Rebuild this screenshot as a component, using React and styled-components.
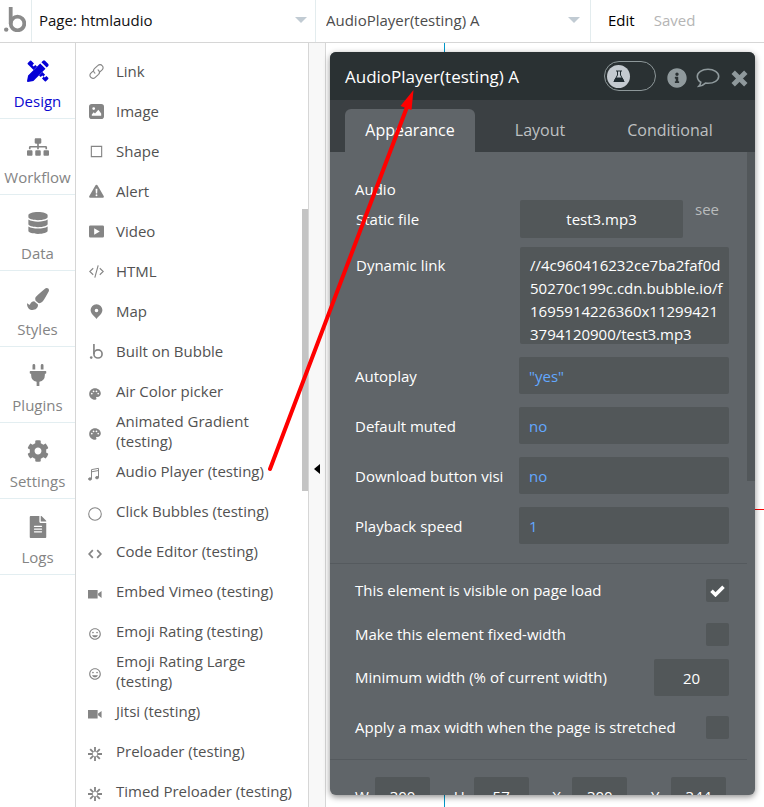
import React from "react";
import styled, { createGlobalStyle, css } from "styled-components";
import { FaSitemap, FaDatabase, FaPaintBrush, FaPlug, FaCog, FaFileAlt, FaInfoCircle } from "react-icons/fa";
import { MdPalette, MdInsertEmoticon } from "react-icons/md";

const Global = createGlobalStyle`
  * { box-sizing: border-box; }
  body { margin: 0; background: #fff; overflow: hidden; }
  body, button, input, select, textarea {
    font-family: "Open Sans", "Noto Sans", sans-serif;
    font-size: 15px;
  }
  button { border: 0; padding: 0; background: none; color: inherit; cursor: pointer; }
`;

const Page = styled.div`
  position: relative;
  display: flex;
  flex-direction: column;
  height: 100vh;
  overflow: hidden;
`;

const TopBar = styled.header`
  display: flex;
  flex: none;
  height: 43px;
  border-bottom: 1px solid #d6d6d6;
`;

const LogoLink = styled.a`
  width: 32px;
  display: flex;
  align-items: center;
  justify-content: center;
  padding: 0 1px 3px 0;
  color: #8b8b8b;
  border-right: 1px solid #e3ecee;
`;

const Picker = styled.div`
  display: grid;
  grid-template-columns: 1fr 10px;
  align-items: center;
  width: ${(p) => p.$width};
  padding: ${(p) => (p.$wide ? "0 10px 2px 7px" : "0 12px 2px 10px")};
  border-right: 1px solid #e3ecee;
`;

const PickerSelect = styled.select`
  appearance: none;
  border: 0;
  padding: 0;
  background: none;
  color: ${(p) => p.$color};
`;

const Caret = styled.span`
  border: 6px solid transparent;
  border-top: 6px solid #c1cbd3;
  border-bottom: 0;
`;

const TopActions = styled.div`
  display: flex;
  align-items: center;
  gap: 19px;
  padding: 0 0 2px 17px;
`;

const EditButton = styled.button`
  color: #000;
`;

const SavedStatus = styled.span`
  color: #b5b5b5;
`;

const Workspace = styled.div`
  display: flex;
  flex: 1;
  min-height: 0;
`;

const Sidebar = styled.nav`
  width: 76px;
  flex: none;
  border-right: 1px solid #d6d6d6;
`;

const NavLink = styled.a`
  display: flex;
  flex-direction: column;
  align-items: center;
  height: 76px;
  padding-top: 17px;
  gap: 8px;
  border-bottom: 1px solid #e3eef1;
  color: ${(p) => (p.$active ? "#0b08d0" : "#848484")};
  text-decoration: none;
  line-height: 22px;
  svg { width: 22px; height: 22px; flex: none; color: ${(p) => (p.$active ? "#0500d6" : "#848484")}; }
`;

const Palette = styled.section`
  display: flex;
  flex: none;
  width: 233px;
  border-right: 1px solid #d6d6d6;
  overflow: hidden;
`;

const ElementList = styled.ul`
  flex: 1;
  margin: 0;
  padding: 8px 0 0 12px;
  list-style: none;
`;

const ElementButton = styled.button`
  display: flex;
  align-items: center;
  width: 100%;
  height: 40px;
  text-align: left;
  line-height: 20px;
  color: #525252;
`;

const ElementIcon = styled.span`
  display: flex;
  width: 28px;
  flex: none;
  color: #858585;
  padding: ${(p) => (p.$plugin ? "5px 0 0 0" : "0 0 0 1px")};
  svg { width: ${(p) => (p.$plugin ? "14px" : "15px")}; height: ${(p) => (p.$plugin ? "14px" : "15px")}; }
`;

const Scroller = styled.div`
  flex: none;
  width: ${(p) => p.$width};
  padding-top: ${(p) => p.$offset};
  &::before {
    content: "";
    display: block;
    height: ${(p) => p.$length};
    background: ${(p) => p.$color};
  }
`;

const Collapse = styled.button`
  flex: none;
  width: 17px;
  display: flex;
  align-items: center;
  justify-content: center;
  background: #f8f8f8;
  border-right: 1px solid #d6d6d6;
  padding-top: 88px;
`;

const CollapseArrow = styled.span`
  border: 5px solid transparent;
  border-right: 6px solid #000;
  border-left: 0;
`;

const Canvas = styled.main`
  position: relative;
  flex: 1;
  min-width: 0;
  display: flex;
  padding: 9px 9px 12px 4px;
`;

const VerticalGuide = styled.span`
  position: absolute;
  top: 0;
  bottom: 0;
  left: 118px;
  width: 1px;
  background: #0097c9;
`;

const HorizontalGuide = styled.span`
  position: absolute;
  top: 466px;
  right: 0;
  width: 60px;
  height: 1px;
  background: #f00;
`;

const Panel = styled.section`
  position: relative;
  flex: 1;
  min-width: 0;
  display: flex;
  flex-direction: column;
  border-radius: 6px;
  overflow: hidden;
  background: #606569;
  color: #fff;
  box-shadow: 0 2px 6px rgba(0, 0, 0, 0.45);
`;

const PanelHeader = styled.header`
  display: flex;
  align-items: center;
  flex: none;
  height: 48px;
  padding: 0 7px 0 15px;
  background: #2a3133;
`;

const PanelTitle = styled.h1`
  flex: 1;
  margin: 0;
  font-size: 17px;
  font-weight: 400;
  white-space: nowrap;
`;

const LabToggle = styled.button`
  display: flex;
  align-items: center;
  width: 52px;
  height: 30px;
  margin-right: 11px;
  padding: 0 2px;
  border: 1px solid #8d9799;
  border-radius: 15px;
`;

const Knob = styled.span`
  display: flex;
  align-items: center;
  justify-content: center;
  width: 23px;
  height: 23px;
  border-radius: 50%;
  background: #c4cad0;
`;

const HeaderButton = styled.button`
  display: flex;
  margin-left: ${(p) => p.$gap || "0"};
  padding-top: 4px;
  color: #8f999c;
`;

const Tabs = styled.div`
  display: flex;
  flex: none;
  height: 52px;
  padding: 9px 20px 0 15px;
  background: #3b4043;
`;

const Tab = styled.button`
  flex: 1;
  padding-bottom: 2px;
  font-size: 16px;
  border-radius: 6px 6px 0 0;
  color: #bfc1c2;
  ${(p) => p.$active && css`
    background: #606569;
    color: #fff;
  `}
`;

const PanelBody = styled.div`
  display: flex;
  flex: 1;
  min-height: 0;
  overflow: hidden;
`;

const Form = styled.form`
  flex: 1;
  min-width: 0;
`;

const Section = styled.div`
  display: flex;
  flex-direction: column;
  gap: 13px;
  padding: ${(p) => p.$pad};
  border-bottom: 1px solid #555a5e;
`;

const FieldGroup = styled.div`
  display: flex;
  flex-direction: column;
  gap: ${(p) => p.$gap};
`;

const GroupTitle = styled.h2`
  margin: 0;
  font-size: 15px;
  font-weight: 400;
  line-height: 22px;
`;

const FieldRow = styled.div`
  display: flex;
  align-items: ${(p) => (p.$top ? "flex-start" : "center")};
  min-height: ${(p) => p.$height || "37px"};
`;

const FieldLabel = styled.label`
  width: ${(p) => (p.$inset ? "165px" : "164px")};
  padding-left: ${(p) => (p.$inset ? "1px" : "0")};
  padding-top: ${(p) => (p.$drop || "0")};
  flex: none;
  line-height: 22px;
  white-space: nowrap;
`;

const WideLabel = styled.label`
  flex: 1;
  padding-bottom: 2px;
  line-height: 20px;
  white-space: nowrap;
`;

const fieldBox = css`
  border: 0;
  border-radius: 2px;
  background: #525759;
  color: ${(p) => (p.$dynamic ? "#62a8ff" : "#fff")};
`;

const TextField = styled.input`
  ${fieldBox}
  flex: 1;
  min-width: 0;
  height: 37px;
  padding: 0 10px;
`;

const NumberField = styled.input`
  ${fieldBox}
  width: ${(p) => p.$width};
  height: 37px;
  padding: 0;
  text-align: center;
`;

const FileButton = styled.button`
  ${fieldBox}
  flex: 1;
  height: 38px;
`;

const SeeLink = styled.a`
  align-self: flex-start;
  width: 46px;
  padding-left: 12px;
  line-height: 18px;
  color: #b9bcbd;
  text-decoration: none;
`;

const LinkField = styled.textarea`
  ${fieldBox}
  flex: 1;
  min-width: 0;
  height: 97px;
  padding: 7px 5px 0 10px;
  line-height: 23px;
  resize: none;
  overflow: hidden;
  word-break: break-all;
`;

const CheckBox = styled.input`
  ${fieldBox}
  appearance: none;
  grid-area: 1 / 1;
  width: 23px;
  height: 23px;
  margin: 0;
`;

const CheckWrap = styled.span`
  display: grid;
  place-items: center;
  svg { grid-area: 1 / 1; z-index: 1; pointer-events: none; }
`;

const Geometry = styled.div`
  display: flex;
  justify-content: space-between;
  padding: 17px 21px 0 25px;
`;

const GeometryField = styled.label`
  display: flex;
  align-items: center;
  justify-content: space-between;
  width: 75px;
`;

const ArrowOverlay = styled.svg`
  position: absolute;
  top: 0;
  left: 0;
  pointer-events: none;
`;

const Stroke = ({ size = 16, children, ...rest }) => (
  <svg width={size} height={size} viewBox="0 0 16 16" fill="none" stroke="currentColor" strokeWidth="1.2" {...rest}>{children}</svg>
);

const BubbleMark = ({ width = 16, height = 16, weight = 2.8 }) => (
  <svg width={width} height={height} viewBox="0 0 22 25" fill="none" stroke="currentColor" strokeWidth={weight}>
    <circle cx="2.2" cy="22.6" r="2.2" fill="currentColor" stroke="none" />
    <circle cx="13.5" cy="16.5" r="6.8" />
    <path d="M6.700 0V16.500" />
  </svg>
);

const DesignIcon = () => (
  <svg viewBox="0 0 22 22" fill="currentColor">
    <path d="M4.2.8 7 3.6 5.4 5.2 6.7 6.5 8.3 4.9 10 6.6 6.6 10 .8 4.2Q.2 3.6.8 3L3 .8Q3.6.2 4.2.8Z" />
    <path d="M15.4 12 12 15.4 13.7 17.1 15.3 15.5 16.6 16.8 15 18.4 17.8 21.2Q18.4 21.8 19 21.2L21.2 19Q21.8 18.4 21.2 17.8L19.4 16 17.8 17.6 16.5 16.3 18.1 14.7Z" />
    <path d="M13.2 3.5 18.5 8.8 6.4 20.9.9 22Q0 22 0 21.1L1.1 15.6ZM14.4 2.3 16 .7Q17 0 18 .7L21.3 4Q22 5 21.3 6L19.7 7.6Z" />
  </svg>
);
const LinkIcon = () => (
  <Stroke strokeLinecap="round">
    <path d="M6.3 9.7 5.6 9A3 3 0 0 1 5.8 5L9.6 1.5A3 3 0 0 1 14 1.7 3 3 0 0 1 14.2 6L12 8.2" />
    <path d="M9.7 6.3 10.4 7A3 3 0 0 1 10.2 11L6.4 14.5A3 3 0 0 1 2 14.3 3 3 0 0 1 1.8 10L4 7.8" />
  </Stroke>
);
const ImageIcon = () => (
  <svg viewBox="0 0 16 16" fill="currentColor">
    <path fillRule="evenodd" d="M3 0h10A3 3 0 0 1 16 3v10a3 3 0 0 1-3 3H3A3 3 0 0 1 0 13V3A3 3 0 0 1 3 0ZM3 12.5h10V10L10 6l-3.6 4L5 8.8l-2 2.4ZM5 3.4a1.5 1.5 0 1 0 0 3 1.5 1.5 0 0 0 0-3Z" />
  </svg>
);
const ShapeIcon = () => <Stroke><path d="M2.5 2.5h11v11h-11Z" /></Stroke>;
const AlertIcon = () => (
  <svg viewBox="0 0 16 16" fill="currentColor">
    <path fillRule="evenodd" d="M8 .8q.8 0 1.2.8l6.6 11.400q.3 1.600-1 1.700H1.200Q-.1 14.600.2 13L6.8 1.6Q7.2.8 8 .8ZM7 5l.3 5h1.4L9 5ZM8 11a1 1 0 1 0 0 2 1 1 0 0 0 0-2Z" />
  </svg>
);
const VideoIcon = () => (
  <svg viewBox="0 0 16 16" fill="currentColor">
    <path fillRule="evenodd" d="M1.500 1.500h13Q16 1.500 16 3v10q0 1.500-1.500 1.500h-13Q0 14.500 0 13V3Q0 1.500 1.500 1.500ZM5.500 4.500v7L11.500 8Z" />
  </svg>
);
const HtmlIcon = () => <Stroke><path d="M4.500 4.500.800 8l3.700 3.500M11.500 4.500 15.200 8l-3.700 3.500M9.800 1.500 6.200 14.500" /></Stroke>;
const PinIcon = () => (
  <svg viewBox="0 0 16 16" fill="currentColor">
    <path fillRule="evenodd" d="M8 .2a6.300 6.300 0 0 1 6.300 6.300C14.300 10.500 10.500 13 8 16 5.500 13 1.700 10.500 1.700 6.500A6.300 6.300 0 0 1 8 .2ZM8 5a1.900 1.900 0 1 0 0 3.800A1.900 1.900 0 0 0 8 5Z" />
  </svg>
);
const MusicIcon = () => (
  <Stroke strokeWidth="1.1">
    <path d="M4 13.500V3L12 1.500V12M4 5.500 12 4" />
    <ellipse cx="2.300" cy="13.700" rx="1.700" ry="1.300" fill="currentColor" />
    <ellipse cx="10.300" cy="12.200" rx="1.700" ry="1.300" fill="currentColor" />
  </Stroke>
);
const CircleIcon = () => <Stroke><circle cx="8" cy="8" r="7.2" /></Stroke>;
const CodeIcon = () => <Stroke strokeWidth="2"><path d="M5.500 3.500 1.300 8l4.200 4.500M10.500 3.500 14.700 8l-4.200 4.500" /></Stroke>;
const CameraIcon = () => <svg viewBox="0 0 16 16" fill="currentColor"><path d="M0 3.500h11v9.500H0ZM11.500 7.500 15.500 4.500v8L11.500 9.500Z" /></svg>;
const BurstIcon = () => (
  <Stroke strokeWidth="2.100"><path d="M8 0v5.500M8 10.500V16M0 8h5.500M10.500 8H16M2.500 2.500l3.700 3.700M9.800 9.800l3.700 3.700M13.500 2.500 9.800 6.200M6.200 9.800l-3.700 3.700" /></Stroke>
);
const FlaskIcon = () => (
  <svg width="12" height="13" viewBox="0 0 12 13" fill="none" stroke="#202b30">
    <path d="M3 1h6M4.500 1v4L1 11.500h10L7.500 5V1" />
    <path d="M3 8h6l2 3.500H1Z" fill="#202b30" />
  </svg>
);
const CommentIcon = () => (
  <svg width="24" height="20" viewBox="0 0 24 20" fill="none" stroke="currentColor" strokeWidth="1.600">
    <path d="M12 1.300c6 0 10.700 3 10.700 7s-4.700 7-10.700 7l-2.500-.2C7.500 17 5.500 18 2.800 18.300c1.200-1.300 1.900-2.500 2-4C2.600 13 1.300 10.800 1.300 8.300c0-4 4.700-7 10.700-7Z" />
  </svg>
);
const CloseIcon = () => (
  <svg width="17" height="17" viewBox="0 0 17 17" fill="none" stroke="currentColor" strokeWidth="4.800"><path d="m2.200 2.200 12.600 12.600M14.800 2.200 2.200 14.800" /></svg>
);
const CheckIcon = () => (
  <svg width="15" height="12" viewBox="0 0 15 12" fill="none" stroke="#fff" strokeWidth="3.600"><path d="m1.500 5.800 4 3.900 8-8" /></svg>
);

const navItems = [
  ["Design", DesignIcon], ["Workflow", FaSitemap], ["Data", FaDatabase], ["Styles", FaPaintBrush],
  ["Plugins", FaPlug], ["Settings", FaCog], ["Logs", FaFileAlt],
];

const elements = [
  ["Link", LinkIcon], ["Image", ImageIcon], ["Shape", ShapeIcon], ["Alert", AlertIcon],
  ["Video", VideoIcon], ["HTML", HtmlIcon], ["Map", PinIcon], ["Built on Bubble", BubbleMark],
  ["Air Color picker", MdPalette, true], ["Animated Gradient (testing)", MdPalette, true],
  ["Audio Player (testing)", MusicIcon, true], ["Click Bubbles (testing)", CircleIcon, true],
  ["Code Editor (testing)", CodeIcon, true], ["Embed Vimeo (testing)", CameraIcon, true],
  ["Emoji Rating (testing)", MdInsertEmoticon, true], ["Emoji Rating Large (testing)", MdInsertEmoticon, true],
  ["Jitsi (testing)", CameraIcon, true], ["Preloader (testing)", BurstIcon, true],
  ["Timed Preloader (testing)", BurstIcon, true],
];

const dynamicFields = [
  ["autoplay", "Autoplay", '"yes"'], ["muted", "Default muted", "no"],
  ["download", "Download button visi", "no"], ["speed", "Playback speed", "1"],
];

const Check = ({ id, checked }) => (
  <CheckWrap>
    <CheckBox id={id} type="checkbox" defaultChecked={checked} />
    {checked && <CheckIcon />}
  </CheckWrap>
);

export default function App() {
  return (
    <Page>
      <Global />
      <TopBar>
        <LogoLink href="#home" aria-label="Home"><BubbleMark width={22} height={25} weight={3.8} /></LogoLink>
        <Picker $width="284px" $wide>
          <PickerSelect aria-label="Page" $color="#111"><option>Page: htmlaudio</option></PickerSelect>
          <Caret />
        </Picker>
        <Picker $width="275px">
          <PickerSelect aria-label="Element" $color="#4c4c4c"><option>AudioPlayer(testing) A</option></PickerSelect>
          <Caret />
        </Picker>
        <TopActions>
          <EditButton type="button">Edit</EditButton>
          <SavedStatus>Saved</SavedStatus>
        </TopActions>
      </TopBar>
      <Workspace>
        <Sidebar>
          {navItems.map(([name, Icon], i) => (
            <NavLink key={name} href={`#${name.toLowerCase()}`} $active={i === 0}><Icon />{name}</NavLink>
          ))}
        </Sidebar>
        <Palette>
          <ElementList>
            {elements.map(([name, Icon, plugin]) => (
              <li key={name}>
                <ElementButton type="button"><ElementIcon $plugin={plugin}><Icon /></ElementIcon>{name}</ElementButton>
              </li>
            ))}
          </ElementList>
          <Scroller $width="6px" $offset="166px" $length="282px" $color="#c4c4c4" />
        </Palette>
        <Collapse type="button" aria-label="Collapse palette"><CollapseArrow /></Collapse>
        <Canvas>
          <VerticalGuide />
          <HorizontalGuide />
          <Panel>
            <PanelHeader>
              <PanelTitle>AudioPlayer(testing) A</PanelTitle>
              <LabToggle type="button" aria-label="Experimental features"><Knob><FlaskIcon /></Knob></LabToggle>
              <HeaderButton type="button" aria-label="Information"><FaInfoCircle size={20} /></HeaderButton>
              <HeaderButton type="button" aria-label="Comment" $gap="9px"><CommentIcon /></HeaderButton>
              <HeaderButton type="button" aria-label="Close" $gap="11px"><CloseIcon /></HeaderButton>
            </PanelHeader>
            <Tabs>
              <Tab type="button" $active>Appearance</Tab>
              <Tab type="button">Layout</Tab>
              <Tab type="button">Conditional</Tab>
            </Tabs>
            <PanelBody>
              <Form>
                <Section $pad="26px 18px 19px 25px">
                  <FieldGroup $gap="9px">
                    <div>
                      <GroupTitle>Audio</GroupTitle>
                      <FieldRow>
                        <FieldLabel as="span" $inset>Static file</FieldLabel>
                        <FileButton type="button">test3.mp3</FileButton>
                        <SeeLink href="#file">see</SeeLink>
                      </FieldRow>
                    </div>
                    <FieldRow $top>
                      <FieldLabel htmlFor="link" $inset $drop="7px">Dynamic link</FieldLabel>
                      <LinkField id="link" spellCheck={false} defaultValue="//4c960416232ce7ba2faf0d50270c199c.cdn.bubble.io/f1695914226360x112994213794120900/test3.mp3" />
                    </FieldRow>
                  </FieldGroup>
                  {dynamicFields.map(([id, label, value]) => (
                    <FieldRow key={id}>
                      <FieldLabel htmlFor={id}>{label}</FieldLabel>
                      <TextField id={id} defaultValue={value} $dynamic />
                    </FieldRow>
                  ))}
                </Section>
                <Section $pad="15px 18px 13px 25px">
                  <FieldGroup $gap="21px">
                    <FieldRow $height="23px"><WideLabel htmlFor="visible">This element is visible on page load</WideLabel><Check id="visible" checked /></FieldRow>
                    <FieldRow $height="23px"><WideLabel htmlFor="fixed">Make this element fixed-width</WideLabel><Check id="fixed" /></FieldRow>
                  </FieldGroup>
                  <FieldRow><WideLabel htmlFor="minimum">Minimum width (% of current width)</WideLabel><NumberField id="minimum" defaultValue="20" $width="75px" /></FieldRow>
                  <FieldRow><WideLabel htmlFor="maximum">Apply a max width when the page is stretched</WideLabel><Check id="maximum" /></FieldRow>
                </Section>
                <Geometry>
                  {[["W", "300"], ["H", "57"], ["X", "300"], ["Y", "344"]].map(([name, value]) => (
                    <GeometryField key={name}>{name}<NumberField defaultValue={value} $width="55px" /></GeometryField>
                  ))}
                </Geometry>
              </Form>
              <Scroller $width="8px" $offset="0" $length="329px" $color="#52575a" />
            </PanelBody>
          </Panel>
        </Canvas>
      </Workspace>
      <ArrowOverlay width="420" height="480" viewBox="0 0 420 480" aria-hidden="true">
        <path d="M270 469 407 107" stroke="#f00" strokeWidth="4" strokeLinecap="round" />
        <path d="M413.500 90 400.500 106 411.500 110Z" fill="#f00" />
      </ArrowOverlay>
    </Page>
  );
}
